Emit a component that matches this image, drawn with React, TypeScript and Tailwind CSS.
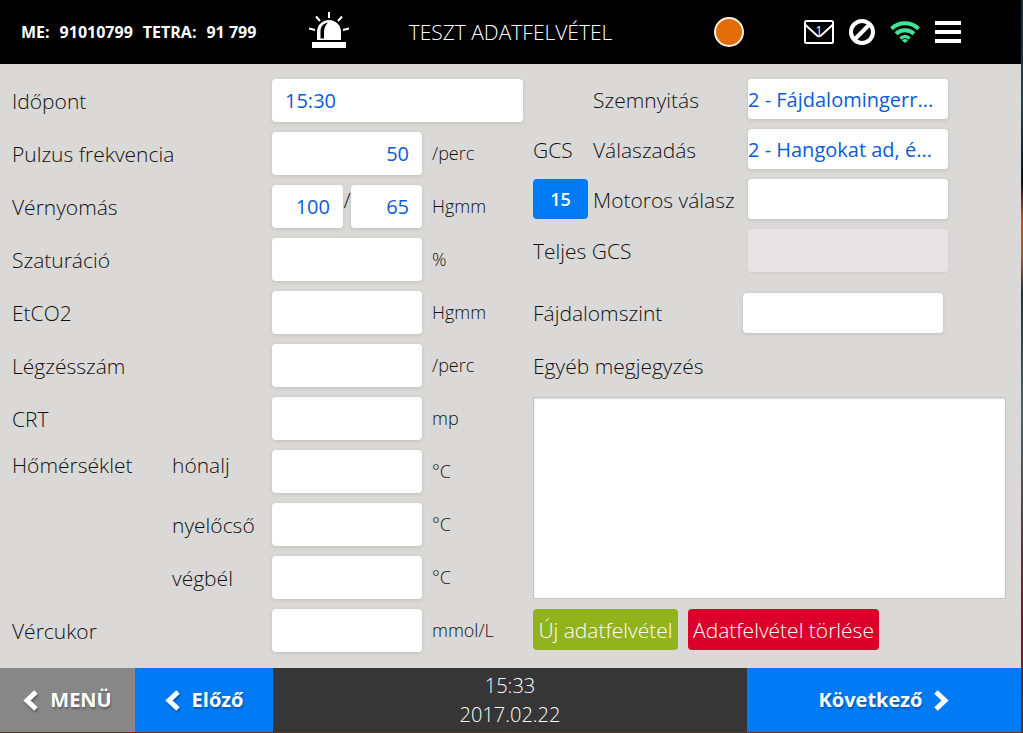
import type { ReactNode } from "react";

const inputClass =
  "h-[43px] min-w-0 rounded bg-white px-[13px] text-xl font-medium text-[#0b5cd7] shadow-[0_1px_4px_rgba(0,0,0,0.12)] outline-none";
const selectClass =
  "h-10 w-[200px] appearance-none rounded bg-white pt-0.5 text-xl font-medium text-[#0b5cd7] shadow-[0_1px_4px_rgba(0,0,0,0.12)] outline-none";
const unitClass = "ml-[10px] pb-0.5 text-lg";

const vitals = [
  { id: "saturation", label: "Szaturáció", unit: "%" },
  { id: "etco2", label: "EtCO2", unit: "Hgmm" },
  { id: "respiration", label: "Légzésszám", unit: "/perc" },
  { id: "crt", label: "CRT", unit: "mp" },
];

const temperatures = [
  { id: "armpit", label: "hónalj" },
  { id: "esophagus", label: "nyelőcső" },
  { id: "rectal", label: "végbél" },
];

const gcs = [
  { id: "eye", label: "Szemnyitás", value: "2 - Fájdalomingerr..." },
  { id: "verbal", label: "Válaszadás", value: "2 - Hangokat ad, é..." },
  { id: "motor", label: "Motoros válasz", value: "" },
];

const Siren = () => (
  <svg width="40" height="36" viewBox="0 0 40 36" fill="none" stroke="white" strokeWidth="2">
    <path d="M20 0v6M7 4.500l4 4.500M33 4.500l-4 4.500M0 16.500l6 1.500M40 16.500l-6 1.500" />
    <path d="M8 28V20a12 12 0 0 1 24 0v8z" fill="white" stroke="none" />
    <path d="M11.500 26.500h3.500v-6c0-4 1-7 4-10-5 1-7.500 4-7.500 9z" fill="black" stroke="none" />
    <path d="M3 30h34v6H3z" fill="white" stroke="none" />
  </svg>
);

const Mail = () => (
  <svg width="30" height="24" viewBox="0 0 30 24" fill="none" stroke="white" strokeWidth="2">
    <rect x="1" y="1" width="28" height="22" rx="1.500" />
    <path d="M1.500 5l11.500 10.500q2 1.500 4 0L28.500 5" />
  </svg>
);

const Ban = () => (
  <svg width="26" height="26" viewBox="0 0 26 26" fill="none" stroke="white" strokeWidth="4">
    <circle cx="13" cy="13" r="11" />
    <path d="M20.500 5.500l-15 15" />
  </svg>
);

const Wifi = () => (
  <svg width="30" height="22" viewBox="0 0 30 22" fill="none" stroke="#3ee695" strokeWidth="4">
    <path d="M1.500 7.800a19.500 19.500 0 0 1 27 0" />
    <path d="M6 12.800a13 13 0 0 1 18 0" />
    <path d="M10.400 17.400a6.800 6.800 0 0 1 9.200 0" strokeWidth="3.400" />
    <path d="M15 22l-3-2.600a4.300 4.300 0 0 1 6 0z" fill="#3ee695" stroke="none" />
  </svg>
);

const Bars = () => (
  <svg width="26" height="22" viewBox="0 0 26 22" fill="white">
    <path d="M0 0h26v4H0zM0 9h26v4H0zM0 18h26v4H0z" />
  </svg>
);

const Chevron = ({ right = false }: { right?: boolean }) => (
  <svg
    width="15"
    height="21"
    viewBox="0 0 15 21"
    fill="none"
    stroke="white"
    strokeWidth="5"
    className={right ? "rotate-180" : "drop-shadow-[1px_2px_1px_rgba(0,0,0,0.3)]"}
  >
    <path d="M13 2L4 10.500L13 19" />
  </svg>
);

const Row = ({ id, label, unit, children }: { id: string; label: string; unit?: string; children: ReactNode }) => (
  <div className="flex items-center">
    <label htmlFor={id} className="w-[260px] shrink-0">{label}</label>
    {children}
    {unit && <span className={unitClass}>{unit}</span>}
  </div>
);

const Header = () => (
  <header className="grid h-16 grid-cols-[1fr_auto_1fr] items-center bg-black text-white">
    <div className="flex items-center justify-between pl-[21px] pr-[60px]">
      <p className="flex gap-[10px] text-base font-bold">
        <span>ME:</span>
        <span>91010799</span>
        <span>TETRA:</span>
        <span>91 799</span>
      </p>
      <div className="pb-1">
        <Siren />
      </div>
    </div>
    <h1 className="text-[21px] leading-7 font-light">TESZT ADATFELVÉTEL</h1>
    <div className="flex items-center justify-end gap-[15px] pr-[60px]">
      <span className="mr-[45px] size-[30px] rounded-full border-2 border-[#fff0e0] bg-[#e36c0a]" />
      <button type="button" className="relative">
        <Mail />
        <span className="absolute inset-0 text-center text-xs leading-[22px]">1</span>
      </button>
      <Ban />
      <Wifi />
      <button type="button" aria-label="Menü">
        <Bars />
      </button>
    </div>
  </header>
);

const Vitals = () => (
  <section className="flex w-[511px] shrink-0 flex-col gap-[10px]">
    <Row id="time" label="Időpont">
      <input id="time" defaultValue="15:30" className={`${inputClass} flex-1`} />
    </Row>
    <Row id="pulse" label="Pulzus frekvencia" unit="/perc">
      <input id="pulse" defaultValue="50" className={`${inputClass} w-[150px] text-right`} />
    </Row>
    <Row id="systolic" label="Vérnyomás" unit="Hgmm">
      <div className="flex w-[150px]">
        <input id="systolic" defaultValue="100" className={`${inputClass} w-[71px] text-right`} />
        <span className="w-2 text-center leading-[30px]">/</span>
        <input aria-label="Vérnyomás" defaultValue="65" className={`${inputClass} w-[71px] text-right`} />
      </div>
    </Row>
    {vitals.map((v) => (
      <Row key={v.id} id={v.id} label={v.label} unit={v.unit}>
        <input id={v.id} className={`${inputClass} w-[150px] text-right`} />
      </Row>
    ))}
    {temperatures.map((t, i) => (
      <div key={t.id} className="flex items-center">
        <span className="w-40 self-start leading-[30px]">{i === 0 && "Hőmérséklet"}</span>
        <label htmlFor={t.id} className={i === 0 ? "w-[100px] self-start leading-[30px]" : "w-[100px]"}>
          {t.label}
        </label>
        <input id={t.id} className={`${inputClass} w-[150px] text-right`} />
        <span className={unitClass}>°C</span>
      </div>
    ))}
    <Row id="glucose" label="Vércukor" unit="mmol/L">
      <input id="glucose" className={`${inputClass} w-[150px] text-right`} />
    </Row>
  </section>
);

const Assessment = () => (
  <section className="flex flex-1 flex-col pb-0.5">
    <div className="grid grid-cols-[60px_155px_200px] items-center gap-y-[10px]">
      {gcs.map((g) => (
        <div key={g.id} className="contents">
          {g.id === "motor" ? (
            <button type="button" className="h-10 w-[55px] rounded bg-[#007bf5] text-lg font-semibold text-white">
              15
            </button>
          ) : (
            <span className="pt-0.5">{g.id === "verbal" && "GCS"}</span>
          )}
          <label htmlFor={g.id} className="pt-0.5">{g.label}</label>
          <select id={g.id} defaultValue={g.value} className={selectClass}>
            <option>{g.value}</option>
          </select>
        </div>
      ))}
      <label htmlFor="total" className="col-span-2">Teljes GCS</label>
      <input id="total" disabled className="h-[43px] min-w-0 rounded bg-[#e6e4e5] px-[13px] text-right shadow-[0_1px_3px_rgba(0,0,0,0.06)]" />
    </div>

    <div className="mt-[21px] flex items-center">
      <label htmlFor="pain" className="w-[210px]">Fájdalomszint</label>
      <select id="pain" className={selectClass}>
        <option></option>
      </select>
    </div>

    <label htmlFor="note" className="mt-[18px] leading-[30px]">Egyéb megjegyzés</label>
    <textarea
      id="note"
      className="mt-4 mr-[15px] min-h-[202px] flex-1 resize-none border border-[#c4c4c4] bg-white p-2 shadow-[inset_0_1px_2px_rgba(0,0,0,0.15)] outline-none"
    />
    <div className="mt-[10px] flex gap-[10px]">
      <button type="button" className="h-[41px] min-w-[145px] rounded bg-[#92b31b] px-1 text-white">Új adatfelvétel</button>
      <button type="button" className="h-[41px] min-w-[191px] rounded bg-[#db0029] px-1 text-white">Adatfelvétel törlése</button>
    </div>
  </section>
);

const Footer = () => (
  <footer className="grid h-16 grid-cols-[135px_138px_1fr_274px] text-xl text-white">
    <button type="button" className="flex items-center justify-center gap-3 bg-[#878787] font-bold text-shadow-[1px_2px_2px_rgba(0,0,0,0.3)]">
      <Chevron />
      MENÜ
    </button>
    <button type="button" className="flex items-center justify-center gap-3 bg-[#007bf5] font-bold text-shadow-[1px_2px_2px_rgba(0,0,0,0.3)]">
      <Chevron />
      Előző
    </button>
    <div className="flex flex-col items-center justify-center bg-[#363636] leading-[29px] font-light">
      <span>15:33</span>
      <span>2017.02.22</span>
    </div>
    <button type="button" className="flex items-center justify-center gap-3 bg-[#007bf5] font-bold text-shadow-[1px_2px_2px_rgba(0,0,0,0.3)]">
      Következő
      <Chevron right />
    </button>
  </footer>
);

const App = () => {
  return (
    <div className="flex min-h-screen flex-col bg-[linear-gradient(#1d2b33,#24404f_14%,#0c1218_25%,#c0503a_30%,#9a5a48_35%,#1d3238_40%,#4a6468_56%,#5a2030_85%,#5a3424_100%)] pr-[2px] pb-px font-['Open_Sans',sans-serif]">
      <Header />
      <main className="flex flex-1 gap-[10px] bg-[#dad9d7] pt-[15px] pb-4 pl-3 text-[21px] leading-7 font-light text-[#111]">
        <Vitals />
        <Assessment />
      </main>
      <Footer />
    </div>
  );
};

export default App;
